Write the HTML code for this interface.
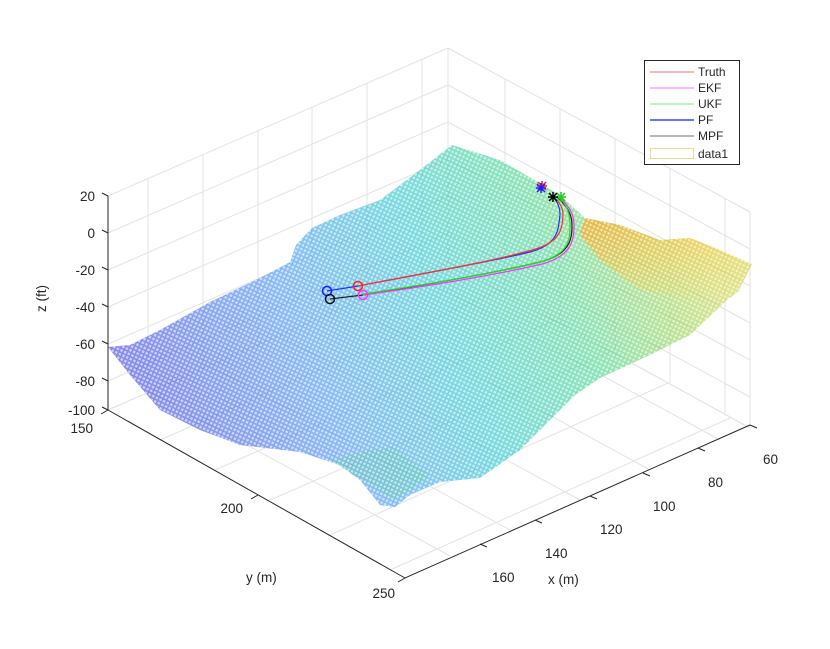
<!DOCTYPE html>
<html><head><style>
html,body{margin:0;padding:0;background:#fff;}
svg{display:block;font-family:"Liberation Sans",sans-serif;}
</style></head><body>
<svg width="830" height="649" viewBox="0 0 830 649" xmlns="http://www.w3.org/2000/svg">
<defs>
<linearGradient id="g" x1="150" y1="450" x2="700" y2="230" gradientUnits="userSpaceOnUse">
<stop offset="0" stop-color="#3b3ee0"/>
<stop offset="0.3" stop-color="#3f8cf0"/>
<stop offset="0.55" stop-color="#22c3c8"/>
<stop offset="0.75" stop-color="#40d08a"/>
<stop offset="0.9" stop-color="#90d050"/>
<stop offset="1" stop-color="#c8d040"/>
</linearGradient>
<linearGradient id="o" x1="600" y1="220" x2="650" y2="330" gradientUnits="userSpaceOnUse">
<stop offset="0" stop-color="#ffa820" stop-opacity="0.95"/>
<stop offset="0.5" stop-color="#ffc030" stop-opacity="0.6"/>
<stop offset="1" stop-color="#f8d030" stop-opacity="0"/>
</linearGradient>
<pattern id="m" width="4" height="4" patternUnits="userSpaceOnUse" patternTransform="rotate(25)">
<rect x="1.1" y="1.1" width="2.4" height="2.4" fill="#fff" fill-opacity="0.6"/>
</pattern>
</defs>
<g stroke="#e3e3e3" stroke-width="1" fill="none">
<path d="M108 196L448 48M108 233L448 85M108 270L448 122M108 307L448 159M108 344L448 196M108 381L448 233M108 410L448 262"/>
<path d="M448 48L750 212M448 85L750 249M448 122L750 286M448 159L750 323M448 196L750 360M448 233L750 397M448 262L750 428"/>
<path d="M148 179V393M203 155V369M258 131V345M312 107V321M367 83V297M422 59V273M448 48V262"/>
<path d="M505 79V293M560 109V323M615 139V353M670 169V383M725 199V413M750 212V428"/>
<path d="M108 410L448 262L750 428M160 440L500 290M215 470L555 320M270 500L610 352M330 535L668 383M390 570L730 418"/>
<path d="M150 392L450 556M210 366L510 530M280 336L580 500M350 306L650 470M420 276L720 440"/>
</g>
<g>
<path d="M108 347L130 345L160 330L210 302L260 278L290 262L296 245L312 228L340 215L380 200L420 170L452 145L500 160L560 195L585 218L620 225L660 240L690 238L720 250L752 264L738 292L727 300L690 335L650 355L600 378L575 395L540 430L520 450L480 478L440 482L410 495L395 507L380 505L360 480L340 465L300 452L240 445L200 430L160 410L130 375Z" fill="url(#g)" fill-opacity="0.62"/>
<path d="M585 218L620 225L660 240L690 238L720 250L752 264L738 292L727 300L690 300L640 290L600 260L580 235Z" fill="url(#o)" fill-opacity="0.75"/>
<path d="M330 460L370 450L395 448L410 460L430 475L410 490L395 500L370 485Z" fill="#5ad0a0" fill-opacity="0.35"/>
<path d="M108 347L130 345L160 330L210 302L260 278L290 262L296 245L312 228L340 215L380 200L420 170L452 145L500 160L560 195L585 218L620 225L660 240L690 238L720 250L752 264L738 292L727 300L690 335L650 355L600 378L575 395L540 430L520 450L480 478L440 482L410 495L395 507L380 505L360 480L340 465L300 452L240 445L200 430L160 410L130 375Z" fill="url(#m)"/>
</g>
<g fill="none" stroke-width="1.2">
<path d="M327 291L358 286C420 274 490 262 530 252C560 244 558 228 560 215C560 205 556 200 553 197" stroke="#2030ff"/>
<path d="M358 286C420 274 490 262 532 250C562 242 562 228 563 215C563 205 557 200 553 197" stroke="#ff3030"/>
<path d="M330 299L363 295C430 284 500 272 540 262C570 254 572 240 572 225C572 210 562 202 557 197" stroke="#222"/>
<path d="M363 295C430 286 500 274 542 264C572 256 574 240 574 225C574 210 564 202 560 197" stroke="#ff30ff"/>
<path d="M363 294C430 284 500 272 540 262C569 254 570 240 570 225C570 210 564 203 562 200" stroke="#20e020"/>
</g>
<g fill="none" stroke-width="1.5">
<circle cx="327" cy="291" r="4.5" stroke="#1020ff"/>
<circle cx="330" cy="299" r="4.5" stroke="#111"/>
<circle cx="358" cy="286" r="4.5" stroke="#ff2020"/>
<circle cx="363" cy="295" r="4.5" stroke="#ff30ff"/>
</g>
<g stroke-width="1.5">
<path d="M537 186l10 0M542 181l0 10M538 182l8 8M546 182l-8 8" stroke="#ff2020"/>
<path d="M536 188l10 0M541 183l0 10M537 184l8 8M545 184l-8 8" stroke="#2020ff"/>
<path d="M556 197l10 0M561 192l0 10M557 193l8 8M565 193l-8 8" stroke="#20d020"/>
<path d="M548 197l10 0M553 192l0 10M549 193l8 8M557 193l-8 8" stroke="#000"/>
</g>
<g stroke="#262626" stroke-width="1" fill="none">
<path d="M108 196V410M108 196L102 193M108 233L102 230M108 270L102 267M108 307L102 304M108 344L102 341M108 381L102 378M108 410L102 407"/>
<path d="M108 410L405 578L750 425"/>
<path d="M108 410L101 414M258 495L251 499M405 578L398 582"/>
<path d="M750 425L757 428M698 448L705 451M643 473L650 476M590 496L597 499M535 520L542 523M480 544L487 547"/>
</g>
<g font-size="13.5" fill="#262626" text-anchor="end">
<text x="95" y="201">20</text>
<text x="95" y="238">0</text>
<text x="95" y="275">-20</text>
<text x="95" y="312">-40</text>
<text x="95" y="349">-60</text>
<text x="95" y="386">-80</text>
<text x="95" y="415">-100</text>
<text x="93" y="433">150</text>
<text x="243" y="513">200</text>
<text x="395" y="598">250</text>
</g>
<g font-size="13.5" fill="#262626">
<text x="763" y="464">60</text>
<text x="708" y="487">80</text>
<text x="653" y="511">100</text>
<text x="600" y="534">120</text>
<text x="545" y="558">140</text>
<text x="492" y="582">160</text>
<text x="246" y="582">y (m)</text>
<text x="548" y="584">x (m)</text>
<text transform="translate(46,312) rotate(-90)">z (ft)</text>
</g>
<rect x="644.5" y="60.5" width="95" height="104" fill="#fff" stroke="#262626"/>
<g stroke-width="1">
<line x1="650" y1="72" x2="694" y2="72" stroke="#f07070"/>
<line x1="650" y1="88" x2="694" y2="88" stroke="#ff70ff"/>
<line x1="650" y1="104" x2="694" y2="104" stroke="#70f070"/>
<line x1="650" y1="120" x2="694" y2="120" stroke="#7070ff" stroke-width="2"/>
<line x1="650" y1="136" x2="694" y2="136" stroke="#707070"/>
</g>
<rect x="650.5" y="148.5" width="43" height="10" fill="none" stroke="#e0e090"/>
<g font-size="12" fill="#262626">
<text x="698" y="76">Truth</text>
<text x="698" y="92">EKF</text>
<text x="698" y="108">UKF</text>
<text x="698" y="124">PF</text>
<text x="698" y="140">MPF</text>
<text x="698" y="158">data1</text>
</g>
</svg>
</body></html>
